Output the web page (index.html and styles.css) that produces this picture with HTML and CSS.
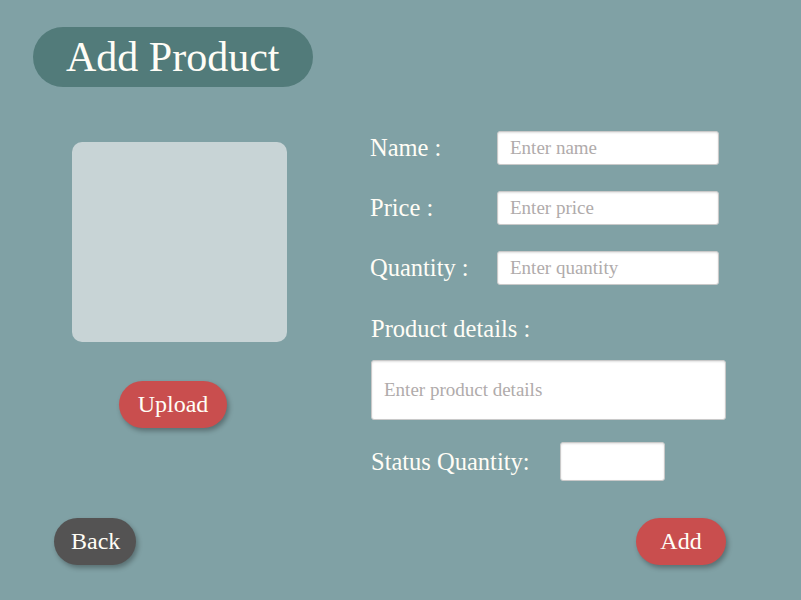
FILE: index.html
```html
<!DOCTYPE html>
<html>
<head>
<meta charset="utf-8">
<link rel="stylesheet" href="styles.css">
</head>
<body>
<div class="page">
  <h1 class="title">Add Product</h1>
  <div class="main">
    <div class="left">
      <div class="photo"></div>
      <button class="btn btn-red upload">Upload</button>
    </div>
    <div class="form">
      <div class="row"><label class="label">Name :</label><input class="field" placeholder="Enter name"></div>
      <div class="row"><label class="label">Price :</label><input class="field" placeholder="Enter price"></div>
      <div class="row"><label class="label">Quantity :</label><input class="field" placeholder="Enter quantity"></div>
      <div class="details-label">Product details :</div>
      <input class="details" placeholder="Enter product details">
      <div class="status"><label class="label status-label">Status Quantity:</label><input class="status-field"></div>
    </div>
  </div>
  <div class="bottom">
    <button class="btn btn-dark">Back</button>
    <button class="btn btn-red">Add</button>
  </div>
</div>
</body>
</html>
```

FILE: styles.css
```css
* { box-sizing: border-box; }
html, body { margin: 0; height: 100%; }
body {
  background: #80a1a5;
  font-family: "Liberation Serif", "Times New Roman", serif;
  color: #fffdf6;
}
.page { padding: 27px 33px 0 33px; }
.title {
  display: inline-block;
  margin: 0;
  height: 60px;
  line-height: 60px;
  padding: 0 33px 0 33px;
  border-radius: 30px;
  background: #527b7a;
  font-size: 42px;
  font-weight: normal;
}
.main { display: flex; margin-top: 44px; }
.left { margin-left: 39px; margin-top: 11px; width: 215px; display: flex; flex-direction: column; }
.photo { width: 215px; height: 200px; background: #c8d4d6; border-radius: 10px; }
.btn {
  font-family: inherit;
  font-size: 24px;
  color: #fffdf6;
  border: none;
  height: 47px;
  border-radius: 24px;
  padding: 0 17px;
  box-shadow: 2px 3px 5px rgba(0,0,0,0.3);
}
.btn-red { background: #c94e4e; }
.btn-dark { background: #545353; }
.upload { margin-top: 39px; margin-left: 47px; align-self: flex-start; width: 108px; }
.form { margin-left: 83px; display: flex; flex-direction: column; }
.row { display: flex; align-items: center; height: 34px; margin-bottom: 26px; }
.label { width: 127px; font-size: 24.5px; }
.field, .details, .status-field {
  font-family: inherit;
  font-size: 19px;
  border: 1px solid #c9c9c9;
  border-radius: 3px;
  background: #fff;
  box-shadow: inset 0 1px 2px rgba(0,0,0,0.12);
  padding: 0 12px;
  color: #333;
  outline: none;
}
.field { width: 222px; height: 34px; }
.field::placeholder, .details::placeholder { color: #b0abab; }
.details-label { font-size: 24.5px; margin-left: 1px; margin-top: 5px; height: 40px; line-height: 26px; }
.details { width: 355px; height: 60px; margin-left: 1px; margin-top: 4px; }
.status { display: flex; align-items: center; margin-top: 22px; margin-left: 1px; }
.status-label { width: 189px; }
.status-field { width: 105px; height: 39px; }
.bottom { display: flex; justify-content: space-between; padding: 0 42px 0 21px; margin-top: 37px; }
.bottom .btn-dark { width: 82px; }
.bottom .btn-red { width: 90px; }
```
